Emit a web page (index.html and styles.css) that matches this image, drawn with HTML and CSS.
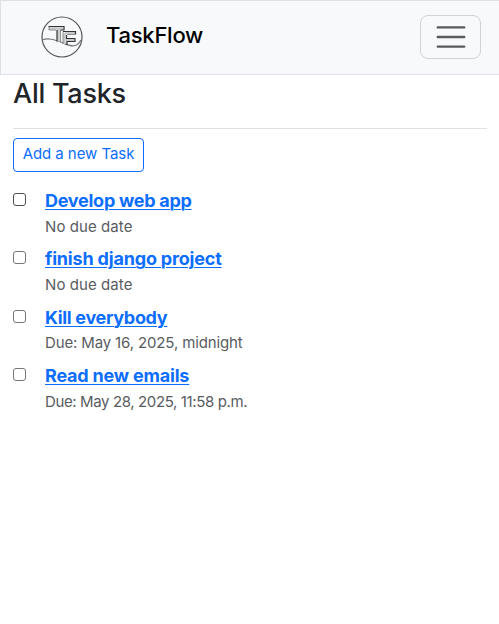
FILE: index.html
```html
<!DOCTYPE html>
<html lang="en">
<head>
<meta charset="utf-8">
<title>TaskFlow</title>
<link rel="stylesheet" href="styles.css">
</head>
<body>
<nav class="navbar">
  <a class="brand" href="#">
    <svg class="logo" viewBox="0 0 42 42" fill="none">
      <circle cx="21" cy="21" r="20" stroke="#555" stroke-width="1.2"/>
      <path d="M1 24C8 21.500 14 24 21 26.500C29 30 35 33 40 24" stroke="#777" stroke-width="1.2"/>
      <path d="M8 12.500H22M17.500 13V25.500M24 17H34M23.500 17V28M25 24H33" stroke="#c5c7c9" stroke-width="2.500"/>
      <path d="M8 10.500V14H15M19.500 14V26M22 28V15.500M26 18.500H34" stroke="#777" stroke-width=".8"/>
      <path d="M7.500 10.500H23V14H19.500M16 14V25.500M22 15.500H34.500V18.500M25.500 19V22.500H34V25.500H26V29" stroke="#333" stroke-width="1.200"/>
    </svg>
    <span>TaskFlow</span>
  </a>
  <button class="toggler" aria-label="Toggle navigation">
    <svg viewBox="0 0 30 30" fill="none" stroke="#212529" stroke-opacity=".75" stroke-linecap="round" stroke-width="2"><path d="M4 7h22M4 15h22M4 23h22"/></svg>
  </button>
</nav>
<main>
  <h1>All Tasks</h1>
  <hr>
  <a class="add" href="#">Add a new Task</a>
  <ul class="tasks">
    <li><span class="check focus"></span><div><a class="t1" href="#">Develop web app</a><p>No due date</p></div></li>
    <li><span class="check"></span><div><a class="t2" href="#">finish django project</a><p>No due date</p></div></li>
    <li><span class="check"></span><div><a class="t3" href="#">Kill everybody</a><p class="d1">Due: May 16, 2025, midnight</p></div></li>
    <li><span class="check"></span><div><a class="t4" href="#">Read new emails</a><p class="d2">Due: May 28, 2025, 11:58 p.m.</p></div></li>
  </ul>
</main>
</body>
</html>
```
FILE: styles.css
```css
* { box-sizing: border-box; }
body { margin: 0; background: #fff; color: #212529; font-family: Inter, "Liberation Sans", sans-serif; font-size: 15px; }
.navbar { height: 75px; border: 1px solid #dee2e6; border-right: 0; background: #f8f9fa; display: flex; align-items: center; justify-content: space-between; padding: 0 18px 2px 40px; }
.brand { display: flex; align-items: center; gap: 23px; color: #000; text-decoration: none; font-size: 22px; font-weight: 500; line-height: 30px; letter-spacing: -.25px; }
.brand span { padding-bottom: 3px; }
.logo { width: 42px; height: 42px; }
.toggler { width: 61px; height: 44px; padding: 0; border: 1px solid #d0d3d5; border-radius: 8px; background: none; display: grid; place-items: center; }
.toggler svg { width: 36px; height: 36px; }
main { padding: 0 12px 0 13px; }
h1 { margin: 0; height: 53px; line-height: 37px; font-size: 27px; font-weight: 500; letter-spacing: -.25px; }
hr { margin: 0 0 9px; border: 0; border-top: 1px solid #dee2e6; }
.add { display: block; width: 131px; height: 34px; border: 1px solid #0d6efd; border-radius: 4px; color: #0d6efd; text-decoration: none; line-height: 30px; text-align: center; white-space: nowrap; letter-spacing: -.06px; }
.tasks { list-style: none; margin: 15px 0 0; padding: 0; }
.tasks li { display: flex; height: 58.3px; gap: 19px; }
.check { width: 13px; height: 13px; margin-top: 6px; border: 1px solid #767676; border-radius: 3px; background: #fff; }
.focus { border-color: #4f4f4f; }
.tasks a { display: block; width: max-content; height: 27.700px; line-height: 27.500px; color: #0d6efd; font-size: 18px; font-weight: 700; text-underline-offset: 1.500px; text-decoration-thickness: 1px; }
.tasks p { margin: 0; line-height: 24px; color: #595c5f; white-space: nowrap; letter-spacing: .08px; }
.tasks .t1 { letter-spacing: -.27px; }
.tasks .t2 { letter-spacing: -.18px; }
.tasks .t3 { letter-spacing: -.32px; }
.tasks .t4 { letter-spacing: -.2px; }
.tasks .d1 { letter-spacing: -.14px; }
.tasks .d2 { letter-spacing: -.38px; }
```
